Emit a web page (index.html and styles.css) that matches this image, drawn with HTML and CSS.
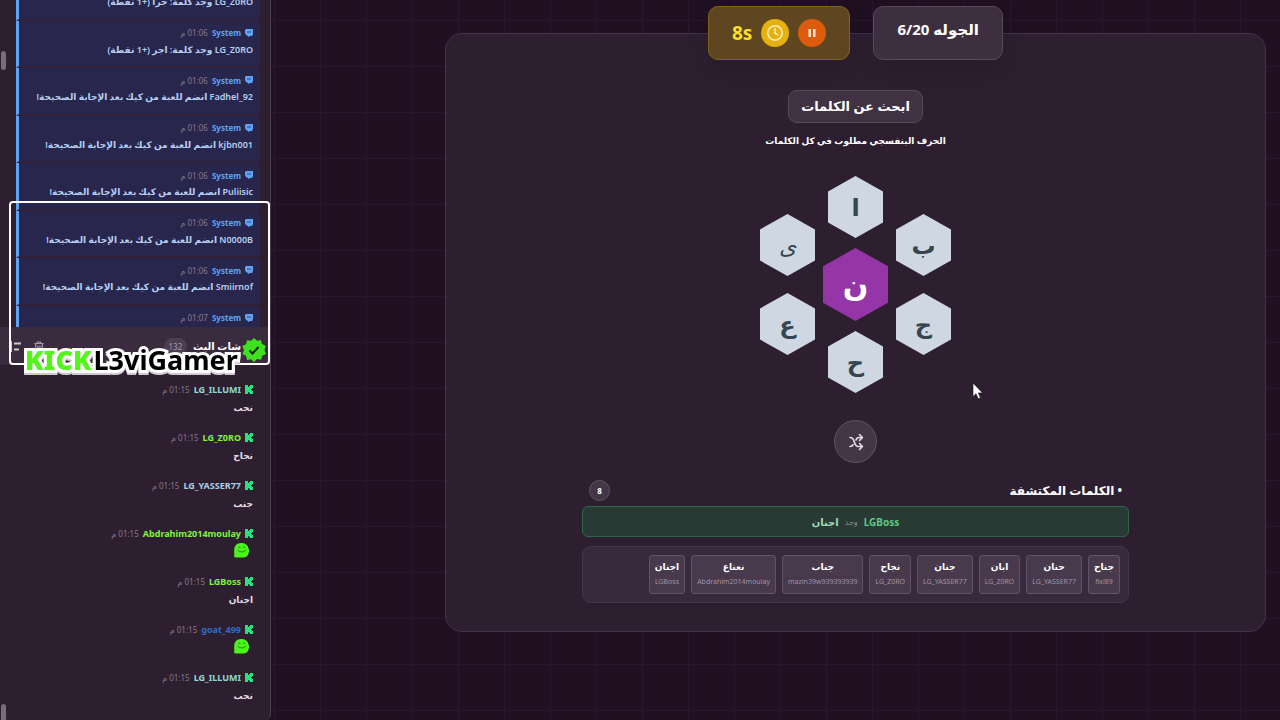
FILE: index.html
```
<!DOCTYPE html>
<html lang="ar" dir="rtl">
  <head>
    <meta charset="UTF-8">
    <title>ابحث عن الكلمات</title>
    <link rel="stylesheet" href="styles.css">
  </head>
  <body>
    <!-- Shared icons -->
    <svg class="sprite" width="0" height="0" aria-hidden="true">
      <symbol id="kick" viewBox="0 0 8 9"><path d="M0 0h3v2h1V1h1V0h3v3H7v1H6v1h1v1h1v3H5V8H4V7H3v2H0z"/></symbol>
      <symbol id="sys" viewBox="0 0 8 8"><path d="M1 0h7v5L7 7H5L3 8V7L1 6 0 4V1z"/><path d="M3 2v2M5 2v2" stroke="#28264f" stroke-width="0.7"/></symbol>
      <symbol id="emote" viewBox="0 0 15 15"><path d="M7 0c4-.3 7 2 7.500 5.500C15.500 7 15 9 14.500 10.500 14 13 12 14.500 9 14.500H1.500C0 14.500 0 13 .3 11.500V6C.5 2.500 3 .3 7 0z" fill="#4bf51c"/><path d="M4 4.500q1.500-1 2.500 0M9 4.500q1.500-1 2.500 0M3.500 7q4.500 4 8.500 0" fill="none" stroke="#1f8d12" stroke-width="1"/></symbol>
    </svg>

    <!-- Game -->
    <main class="game">
      <section class="board">
        <div class="status">
          <div class="badge round">الجوله 6/20</div>
          <div class="badge timer">
            <button class="dot pause" aria-label="إيقاف">
              <svg width="10" height="10" viewBox="0 0 10 10"><path d="M1.500 1h2.500v8H1.500zM6 1h2.500v8H6z" fill="#fbe3d3"/></svg>
            </button>
            <span class="dot clock">
              <svg width="18" height="18" viewBox="0 0 18 18" fill="none" stroke="#fdf0c0" stroke-width="1.500" stroke-linecap="round"><circle cx="9" cy="9" r="7.200"/><path d="M9 4.500V9l3 2"/></svg>
            </span>
            <span class="seconds" dir="ltr">8s</span>
          </div>
        </div>

        <h1 class="title">ابحث عن الكلمات</h1>
        <p class="hint">الحرف البنفسجي مطلوب في كل الكلمات</p>

        <div class="hive">
          <div class="column side">
            <button class="hex">ب</button>
            <button class="hex">ج</button>
          </div>
          <div class="column">
            <button class="hex">ا</button>
            <button class="hex center">ن</button>
            <button class="hex">ح</button>
          </div>
          <div class="column side">
            <button class="hex thin">ى</button>
            <button class="hex">ع</button>
          </div>
        </div>

        <button class="shuffle" aria-label="خلط">
          <svg width="16" height="18" viewBox="0 0 16 18" fill="none" stroke="#e3dde5" stroke-width="1.600" stroke-linecap="round" stroke-linejoin="round"><path d="M2 4.500c6 0 3 9 8 9h4M2 13.500c1.500 0 2.500-.5 3-2M8 7c.5-1.500 1.500-2.500 3-2.500h3M11.500 1.500l3 3-3 3M11.500 10.500l3 3-3 3"/></svg>
        </button>

        <div class="found">
          <div class="found-head">
            <h2>• الكلمات المكتشفة</h2>
            <span class="total">8</span>
          </div>
          <div class="latest"><b>LGBoss</b><span>وجد</span><strong>اجنان</strong></div>
          <ul class="words">
            <li><b>جناح</b><small>fixl89</small></li>
            <li><b>حنان</b><small>LG_YASSER77</small></li>
            <li><b>ابان</b><small>LG_Z0RO</small></li>
            <li><b>جنان</b><small>LG_YASSER77</small></li>
            <li><b>نجاح</b><small>LG_Z0RO</small></li>
            <li><b>جناب</b><small>mazin39w939393939</small></li>
            <li><b>نعناع</b><small>Abdrahim2014moulay</small></li>
            <li><b>اجنان</b><small>LGBoss</small></li>
          </ul>
        </div>
      </section>
    </main>

    <!-- Chat -->
    <aside class="chat">
      <div class="log">
        <ul class="log-list">
          <li><div class="meta"><svg class="ico sys"><use href="#sys"/></svg><b>System</b><time>01:06 م</time></div><p>LG_Z0RO وجد كلمة: جرا (+1 نقطة)</p></li>
          <li><div class="meta"><svg class="ico sys"><use href="#sys"/></svg><b>System</b><time>01:06 م</time></div><p>LG_Z0RO وجد كلمة: اجر (+1 نقطة)</p></li>
          <li><div class="meta"><svg class="ico sys"><use href="#sys"/></svg><b>System</b><time>01:06 م</time></div><p>Fadhel_92 انضم للعبة من كيك بعد الإجابة الصحيحة!</p></li>
          <li><div class="meta"><svg class="ico sys"><use href="#sys"/></svg><b>System</b><time>01:06 م</time></div><p>kjbn001 انضم للعبة من كيك بعد الإجابة الصحيحة!</p></li>
          <li><div class="meta"><svg class="ico sys"><use href="#sys"/></svg><b>System</b><time>01:06 م</time></div><p>Puliisic انضم للعبة من كيك بعد الإجابة الصحيحة!</p></li>
          <li><div class="meta"><svg class="ico sys"><use href="#sys"/></svg><b>System</b><time>01:06 م</time></div><p>N0000B انضم للعبة من كيك بعد الإجابة الصحيحة!</p></li>
          <li><div class="meta"><svg class="ico sys"><use href="#sys"/></svg><b>System</b><time>01:06 م</time></div><p>Smiirnof انضم للعبة من كيك بعد الإجابة الصحيحة!</p></li>
          <li><div class="meta"><svg class="ico sys"><use href="#sys"/></svg><b>System</b><time>01:07 م</time></div><p></p></li>
        </ul>
        <i class="thumb"></i>
      </div>

      <header class="chat-head">
        <h2>شات البث</h2>
        <span class="count">132</span>
        <button class="tool trash" aria-label="مسح">
          <svg width="10" height="11" viewBox="0 0 10 11" fill="none" stroke="#a79bab" stroke-width="1.200"><path d="M0.500 2.500h9M3.500 2.500v-1.500h3v1.500M1.500 2.500l.5 8h6l.5-8M4 4.500v4M6 4.500v4"/></svg>
        </button>
        <button class="tool" aria-label="القائمة">
          <svg width="12" height="11" viewBox="0 0 12 11" fill="none" stroke="#cfc6d2" stroke-width="2"><path d="M1 0v11M4 2.500h7M4 8.500h5"/></svg>
        </button>
      </header>

      <div class="live">
        <ul class="messages">
          <li><div class="meta"><svg class="ico"><use href="#kick"/></svg><b class="mint">LG_ILLUMI</b><time>01:15 م</time></div><p>نحب</p></li>
          <li><div class="meta"><svg class="ico"><use href="#kick"/></svg><b class="lime">LG_Z0RO</b><time>01:15 م</time></div><p>نجاح</p></li>
          <li><div class="meta"><svg class="ico"><use href="#kick"/></svg><b class="ice">LG_YASSER77</b><time>01:15 م</time></div><p>جنب</p></li>
          <li><div class="meta"><svg class="ico"><use href="#kick"/></svg><b class="lime">Abdrahim2014moulay</b><time>01:15 م</time></div><p><svg class="emote"><use href="#emote"/></svg></p></li>
          <li><div class="meta"><svg class="ico"><use href="#kick"/></svg><b class="lime">LGBoss</b><time>01:15 م</time></div><p>اجنان</p></li>
          <li><div class="meta"><svg class="ico"><use href="#kick"/></svg><b class="blue">goat_499</b><time>01:15 م</time></div><p><svg class="emote"><use href="#emote"/></svg></p></li>
          <li><div class="meta"><svg class="ico"><use href="#kick"/></svg><b class="mint">LG_ILLUMI</b><time>01:15 م</time></div><p>نحب</p></li>
        </ul>
        <i class="thumb"></i>
      </div>

      <!-- Stream overlay -->
      <div class="cam" dir="ltr">
        <div class="brand"><b class="kick">KICK</b><b>L3viGamer</b></div>
        <svg class="verified" width="24" height="24" viewBox="0 0 24 24"><path d="M12 0l3 2.800 4-.8 1 4 3.700 1.800L22.500 12l1.500 4-3.800 1.700-1 4-4.200-.7L12 24l-3-2.800-4 .8-1-4.200L.3 16 2 12 .2 8 4 6.200l1-4 4 .6z" fill="#3fe01f"/><path d="M7.500 12.500l3 3 6-6.500" fill="none" stroke="#10230c" stroke-width="2"/></svg>
      </div>
    </aside>

    <svg class="cursor" width="11" height="18" viewBox="0 0 11 18"><path d="M1 1v13.500l3-2.800 2.200 5 2.300-1-2.200-4.800H10.500z" fill="#fff" stroke="#1c1420" stroke-width="0.600"/></svg>
  </body>
</html>
```

FILE: styles.css
```
* {
  box-sizing: border-box;
  margin: 0;
  padding: 0;
}

body {
  display: flex;
  min-height: 100vh;
  overflow: hidden;
  color: #fff;
  font-family: "Noto Sans", "DejaVu Sans", sans-serif;
  background-color: #201022;
  /* Faint grid behind everything */
  background-image:
    linear-gradient(#2a172d 1px, transparent 1px),
    linear-gradient(90deg, #2a172d 1px, transparent 1px);
  background-size: 46px 46px;
  background-position: -2px 20px;
}

ul {
  list-style: none;
}

button {
  border: 0;
  color: inherit;
  font-family: inherit;
  background: none;
  cursor: pointer;
}

.sprite {
  position: absolute;
}

/* Game board */
.game {
  flex: 1;
  min-width: 0;
  padding: 33px 14px 0 174px;
}

.board {
  position: relative;
  display: flex;
  flex-direction: column;
  align-items: center;
  padding: 56px 20px 28px;
  border: 1px solid #42334a;
  border-radius: 17px;
  background: #2d1f30;
}

/* Badges sit over the top edge of the board */
.status {
  position: absolute;
  top: -28px;
  left: 0;
  right: 0;
  display: flex;
  justify-content: center;
  gap: 23px;
}

.badge {
  display: flex;
  align-items: center;
  height: 54px;
  padding: 0 23px;
  border: 1px solid #584a5b;
  border-radius: 10px;
  background: #3d2f40;
  box-shadow: 0 8px 20px rgba(0, 0, 0, 0.15);
}

.round {
  padding-bottom: 9px;
  font-size: 15px;
  font-weight: bold;
}

.timer {
  gap: 9px;
  border-color: #806415;
  background: #5e4720;
}

.dot {
  display: flex;
  align-items: center;
  justify-content: center;
  width: 28px;
  height: 28px;
  border-radius: 50%;
}

.pause {
  background: #dc5b0c;
}

.clock {
  background: #e5b110;
}

.seconds {
  color: #fbe02c;
  font-size: 19px;
  font-weight: bold;
}

.title {
  height: 33px;
  padding: 0 12px;
  border: 1px solid #584a5b;
  border-radius: 9px;
  font-size: 13px;
  line-height: 31px;
  background: #403243;
}

.hint {
  margin-top: 10px;
  font-size: 9px;
  font-weight: bold;
  line-height: 16px;
}

/* Letters */
.hive {
  display: flex;
  align-items: center;
  gap: 8px;
  margin-top: 27px;
}

.column {
  display: flex;
  flex-direction: column;
  align-items: center;
  gap: 10px;
}

.side {
  gap: 17px;
}

.hex {
  width: 55px;
  height: 62px;
  color: #364650;
  font-size: 24px;
  font-weight: bold;
  line-height: 62px;
  background: #cfd8e2;
  clip-path: polygon(50% 0, 100% 25%, 100% 75%, 50% 100%, 0 75%, 0 25%);
}

.center {
  width: 65px;
  height: 73px;
  color: #fff;
  font-size: 30px;
  background: #9435a8;
}

.thin {
  font-size: 22px;
  font-style: italic;
  font-weight: normal;
}

.shuffle {
  display: flex;
  align-items: center;
  justify-content: center;
  width: 43px;
  height: 43px;
  margin-top: 27px;
  border: 1px solid #625465;
  border-radius: 50%;
  background: #443647;
}

/* Found words */
.found {
  width: 100%;
  max-width: 547px;
  margin-top: 17px;
}

.found-head {
  display: flex;
  align-items: center;
  justify-content: space-between;
  height: 20px;
  padding: 0 7px;
}

.found-head h2 {
  font-size: 12px;
}

.total {
  width: 21px;
  height: 21px;
  border: 1px solid #625465;
  border-radius: 50%;
  font-size: 8px;
  font-weight: bold;
  line-height: 19px;
  text-align: center;
  background: #443647;
}

.latest {
  display: flex;
  align-items: center;
  justify-content: center;
  gap: 6px;
  height: 31px;
  margin-top: 6px;
  border: 1px solid #2b6848;
  border-radius: 6px;
  font-size: 10px;
  background: #293933;
}

.latest b {
  color: #5fc987;
}

.latest span {
  color: #84908b;
  font-size: 8px;
}

.latest strong {
  color: #9ddbb5;
}

.words {
  display: flex;
  flex-wrap: wrap;
  gap: 6px;
  margin-top: 9px;
  padding: 8px;
  border: 1px solid #44364a;
  border-radius: 9px;
  background: #39293c;
}

.words li {
  display: flex;
  flex-direction: column;
  align-items: center;
  height: 39px;
  padding: 3px 5px;
  border: 1px solid #625467;
  border-radius: 3px;
  background: #483a4c;
}

.words b {
  font-size: 9px;
  line-height: 16px;
}

.words small {
  color: #a094a4;
  font-size: 7px;
  line-height: 14px;
}

/* Chat column */
.chat {
  position: relative;
  display: flex;
  flex-direction: column;
  flex: 0 0 271px;
  height: 100vh;
  border-right: 1px solid #4b3d4e;
  border-radius: 0 0 6px 0;
  background: #2d1f30;
}

.log {
  position: relative;
  flex: 0 0 327px;
  padding: 0 10px 0 16px;
  overflow: hidden;
}

/* Scrolled list: first and last rows are cut by the panel */
.log-list {
  display: flex;
  flex-direction: column;
  height: 380px;
  margin-top: -27px;
}

.log-list li {
  flex: 1;
  padding: 4px 7px 0;
  border-left: 3px solid #5ea3f5;
  border-bottom: 2px solid #35203a;
  border-radius: 0 4px 4px 0;
  color: #b6d0f3;
  background: #29264d;
}

.meta {
  display: flex;
  align-items: center;
  gap: 4px;
  height: 16px;
  font-size: 9px;
}

.meta b {
  color: #5ea3f5;
}

.log-list b {
  font-size: 8px;
}

.meta time {
  color: #84788b;
  font-size: 8px;
}

.ico {
  width: 8px;
  height: 9px;
  fill: #25e27b;
}

.ico.sys {
  height: 8px;
  fill: #5ea3f5;
}

.log-list p,
.messages p {
  height: 16px;
  font-size: 9px;
  font-weight: 600;
  line-height: 18px;
  white-space: nowrap;
}

.chat-head {
  display: flex;
  align-items: center;
  flex: 0 0 38px;
  padding: 0 29px 0 10px;
  background: #3a2b3e;
}

.chat-head h2 {
  font-size: 10px;
}

.count {
  width: 23px;
  margin-right: 6px;
  border-radius: 9px;
  color: #a79bab;
  font-size: 8px;
  line-height: 17px;
  text-align: center;
  background: #4c3e50;
}

.tool {
  display: flex;
}

.trash {
  margin: 0 auto 0 12px;
}

.live {
  position: relative;
  flex: 1;
  min-height: 0;
  padding: 16px 17px 0;
  overflow: hidden;
}

.messages li {
  height: 48px;
}

.messages p {
  margin-top: 2px;
  color: #e2dce4;
}

.messages .mint { color: #8edbd6; }
.messages .lime { color: #7df53c; }
.messages .ice { color: #a9cfe4; }
.messages .blue { color: #2e6fc4; }

.emote {
  width: 15px;
  height: 15px;
  margin-right: 4px;
}

/* Scrollbar thumbs */
.thumb {
  position: absolute;
  top: 51px;
  left: 1px;
  width: 5px;
  height: 19px;
  border-radius: 3px;
  background: #796c7d;
}

.live .thumb {
  top: auto;
  bottom: -4px;
  height: 20px;
}

/* Camera frame with the streamer's name, over the chat */
.cam {
  position: absolute;
  top: 201px;
  left: 9px;
  width: 261px;
  height: 164px;
  border: 2px solid #fff;
  border-radius: 4px;
}

.brand {
  position: absolute;
  left: 14px;
  bottom: -14px;
  display: flex;
  gap: 2px;
  color: #000;
  font-size: 27px;
  line-height: 34px;
  -webkit-text-stroke: 6px #fff;
  paint-order: stroke fill;
  filter: drop-shadow(0 2px 0 #cfc9d1);
}

.brand .kick {
  color: #53f51c;
  font-weight: 900;
}

.verified {
  position: absolute;
  right: 2px;
  bottom: 1px;
}

.cursor {
  position: absolute;
  top: 382px;
  left: 972px;
}
```
